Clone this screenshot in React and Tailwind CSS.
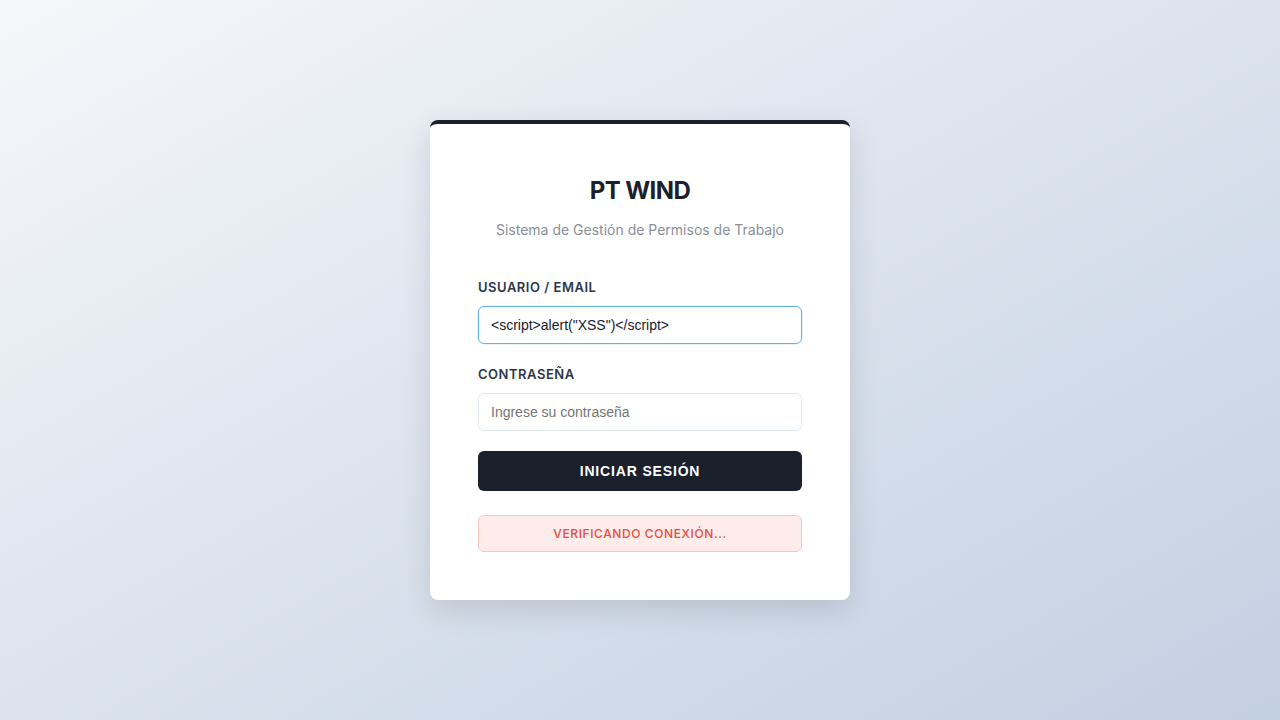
import React, { useState } from 'react';

const App = () => {
    const [user, setUser] = useState('<script>alert("XSS")</script>');
    const [pass, setPass] = useState('');

    return (
        <div className="min-h-screen w-full flex items-center justify-center bg-gradient-to-br from-[#f5f7fa] to-[#c3cfe2] font-['Inter','Liberation_Sans',sans-serif]">
            <div className="w-[420px] bg-white rounded-lg border-t-4 border-[#1a202c] shadow-[0_10px_30px_rgba(0,0,0,0.12)] px-12 pt-12 pb-12">
                {/* Header */}
                <div className="text-center mb-[37px]">
                    <h1 className="text-2xl leading-9 pt-px font-bold tracking-tight text-[#1a202c]">PT WIND</h1>
                    <p className="mt-[10px] text-sm leading-[21px] text-[#8a8f98]">Sistema de Gestión de Permisos de Trabajo</p>
                </div>

                <div className="mb-5">
                    <label className="block text-[13px] leading-5 font-semibold tracking-[0.04em] text-[#2d3748] mb-[9px]">USUARIO / EMAIL</label>
                    <input
                        type="text"
                        value={user}
                        onChange={(e) => setUser(e.target.value)}
                        className="w-full h-[38px] px-3 rounded-md border border-[#63b3ed] shadow-[0_0_0_1px_rgba(99,179,237,0.15)] outline-none text-sm text-[#1a202c] font-['Liberation_Sans',Arial,sans-serif]"
                    />
                </div>

                <div className="mb-5">
                    <label className="block text-[13px] leading-5 font-semibold tracking-[0.04em] text-[#2d3748] mb-[9px]">CONTRASEÑA</label>
                    <input
                        type="password"
                        value={pass}
                        onChange={(e) => setPass(e.target.value)}
                        placeholder="Ingrese su contraseña"
                        className="w-full h-[38px] px-3 rounded-md border border-[#e2e8f0] outline-none text-sm text-[#1a202c] placeholder:text-[#757575] font-['Liberation_Sans',Arial,sans-serif]"
                    />
                </div>

                <button className="w-full h-10 rounded-md bg-[#1a202c] text-white text-sm font-bold tracking-[0.06em] font-['Liberation_Sans',Arial,sans-serif]">
                    INICIAR SESIÓN
                </button>

                <div className="mt-6 h-[37px] flex items-center justify-center rounded-md bg-[#fdecea] border border-[#f8c6c0] text-[12px] font-medium tracking-[0.05em] text-[#e74c3c]">
                    VERIFICANDO CONEXIÓN...
                </div>
            </div>
        </div>
    );
};

export default App;
